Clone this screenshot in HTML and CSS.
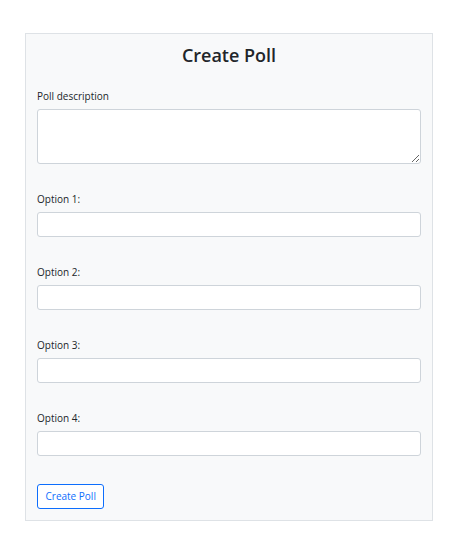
FILE: index.html
```html
<!DOCTYPE html>
<html>
<head>
<meta charset="utf-8">
<link rel="stylesheet" href="styles.css">
</head>
<body>
<div class="poll-card">
  <h2 class="poll-title">Create Poll</h2>
  <form class="poll-form">
    <div class="field">
      <label class="field-label" for="desc">Poll description</label>
      <textarea id="desc" class="field-area"></textarea>
    </div>
    <div class="field">
      <label class="field-label" for="o1">Option 1:</label>
      <input id="o1" class="field-input" type="text">
    </div>
    <div class="field">
      <label class="field-label" for="o2">Option 2:</label>
      <input id="o2" class="field-input" type="text">
    </div>
    <div class="field">
      <label class="field-label" for="o3">Option 3:</label>
      <input id="o3" class="field-input" type="text">
    </div>
    <div class="field">
      <label class="field-label" for="o4">Option 4:</label>
      <input id="o4" class="field-input" type="text">
    </div>
    <button type="button" class="btn-outline">Create Poll</button>
  </form>
</div>
</body>
</html>
```

FILE: styles.css
```css
* { box-sizing: border-box; }
html, body { margin: 0; padding: 0; background: #ffffff; }
body {
  font-family: "Open Sans", "Noto Sans", sans-serif;
  color: #212529;
  font-size: 10px;
  line-height: 1.5;
}
.poll-card {
  margin: 33px 0 0 25px;
  width: 408px;
  background: #f8f9fa;
  border: 1px solid #dee2e6;
  padding: 9px 11px 10.5px;
}
.poll-title {
  margin: 0 0 22px;
  text-align: center;
  font-size: 18px;
  line-height: 24px;
  font-weight: 600;
}
.poll-form { display: flex; flex-direction: column; align-items: flex-start; }
.field { width: 100%; margin-bottom: 27.75px; }
.field-label {
  display: block;
  margin-bottom: 4.5px;
  font-size: 10px;
  line-height: 15.75px;
}
.field-input, .field-area {
  display: block;
  width: 100%;
  background: #ffffff;
  border: 1px solid #ced4da;
  border-radius: 3px;
  font: inherit;
  padding: 4px 8px;
  margin: 0;
}
.field-input { height: 25px; }
.field-area { height: 55px; resize: vertical; }
.field:last-of-type { margin-bottom: 27.5px; }
.btn-outline {
  font: inherit;
  font-size: 10px;
  line-height: 15.75px;
  color: #0d6efd;
  background: #ffffff;
  border: 1px solid #0d6efd;
  border-radius: 3px;
  padding: 4px 7.5px;
  height: 25.5px;
  margin: 0;
}
```
